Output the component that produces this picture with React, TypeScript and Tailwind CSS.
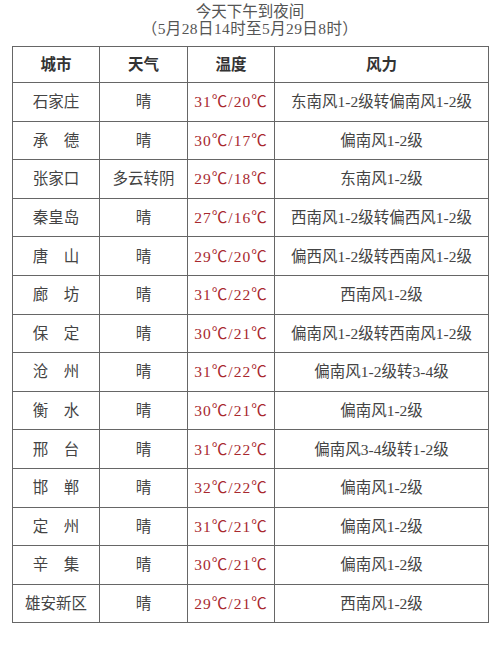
const rows: [string, string, string, string][] = [
  ["石家庄", "晴", "31℃/20℃", "东南风1-2级转偏南风1-2级"],
  ["承　德", "晴", "30℃/17℃", "偏南风1-2级"],
  ["张家口", "多云转阴", "29℃/18℃", "东南风1-2级"],
  ["秦皇岛", "晴", "27℃/16℃", "西南风1-2级转偏西风1-2级"],
  ["唐　山", "晴", "29℃/20℃", "偏西风1-2级转西南风1-2级"],
  ["廊　坊", "晴", "31℃/22℃", "西南风1-2级"],
  ["保　定", "晴", "30℃/21℃", "偏南风1-2级转西南风1-2级"],
  ["沧　州", "晴", "31℃/22℃", "偏南风1-2级转3-4级"],
  ["衡　水", "晴", "30℃/21℃", "偏南风1-2级"],
  ["邢　台", "晴", "31℃/22℃", "偏南风3-4级转1-2级"],
  ["邯　郸", "晴", "32℃/22℃", "偏南风1-2级"],
  ["定　州", "晴", "31℃/21℃", "偏南风1-2级"],
  ["辛　集", "晴", "30℃/21℃", "偏南风1-2级"],
  ["雄安新区", "晴", "29℃/21℃", "西南风1-2级"],
];

export default function App() {
  return (
    <div className="w-[500px] h-[646px] bg-white text-[#444] font-['Liberation_Serif','Noto_Sans_CJK_SC',serif]">
      <div className="pt-[3px] text-center text-[15.5px] leading-[17px] text-[#555]">
        <p>今天下午到夜间</p>
        <p className="tracking-[0.4px]">（5月28日14时至5月29日8时）</p>
      </div>
      <table className="ml-[12px] mt-[9px] w-[477px] border-collapse table-fixed text-[15.5px]">
        <colgroup>
          <col className="w-[87px]" />
          <col className="w-[88px]" />
          <col className="w-[87px]" />
          <col />
        </colgroup>
        <thead>
          <tr className="h-[36px] text-[#333]">
            <th className="border border-[#666] font-bold">城市</th>
            <th className="border border-[#666] font-bold">天气</th>
            <th className="border border-[#666] font-bold">温度</th>
            <th className="border border-[#666] font-bold">风力</th>
          </tr>
        </thead>
        <tbody>
          {rows.map((r) => (
            <tr key={r[0]} className="h-[38.6px] text-center">
              <td className="border border-[#666]">{r[0]}</td>
              <td className="border border-[#666]">{r[1]}</td>
              <td className="border border-[#666] text-[#a8282e] tracking-[1px] whitespace-nowrap">{r[2]}</td>
              <td className="border border-[#666] whitespace-nowrap">{r[3]}</td>
            </tr>
          ))}
        </tbody>
      </table>
    </div>
  );
}
